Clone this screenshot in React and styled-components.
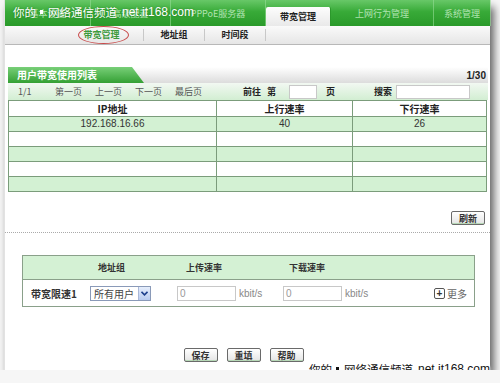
import React from 'react'
import styled, { createGlobalStyle } from 'styled-components'

const GlobalStyle = createGlobalStyle`
  html, body {
    margin: 0;
    padding: 0;
    background: #f6f6f6;
  }
  body {
    font-family: "Noto Sans CJK SC", "Liberation Sans", sans-serif;
    font-size: 11px;
    color: #222;
  }
`

const topTabs = [
  { label: '基本设置', width: 86 },
  { label: '高级配置', width: 80 },
  { label: 'PPPoE服务器', width: 95 },
  { label: '带宽管理', width: 65, active: true },
  { label: '上网行为管理', width: 103 },
  { label: '系统管理', width: 57 },
]

const subTabs = [
  { label: '带宽管理', width: 83, active: true },
  { label: '地址组', width: 60 },
  { label: '时间段', width: 60 },
]

const rows = [
  ['192.168.16.66', '40', '26'],
  ['', '', ''],
  ['', '', ''],
  ['', '', ''],
  ['', '', ''],
]

const Mark = ({ top }) => (
  <Watermark top={top}>
    <span>你的</span>
    <Dot top={top} />
    <span>网络通信频道</span>
    <Net>net.it168.com</Net>
  </Watermark>
)

const App = () => {
  return (
    <>
      <GlobalStyle />
      <Window>
        <TopBar>
          {topTabs.map((t, i) => (
            <TopTab key={i} w={t.width} active={t.active}>
              {t.label}
            </TopTab>
          ))}
        </TopBar>
        <Mark top />

        <SubNav>
          {subTabs.map((t, i) => (
            <SubItem key={i} w={t.width} active={t.active}>
              <SubLabel active={t.active}>
                {t.label}
                {t.active && <Circle />}
              </SubLabel>
            </SubItem>
          ))}
        </SubNav>

        <Section>
          <HeaderBar>
            <HeaderTab>用户带宽使用列表</HeaderTab>
            <PageCount>1/30</PageCount>
          </HeaderBar>
          <Pager>
            <PagerText w={37}>1/1</PagerText>
            <PagerText w={40}>第一页</PagerText>
            <PagerText w={40}>上一页</PagerText>
            <PagerText w={40}>下一页</PagerText>
            <PagerText w={68}>最后页</PagerText>
            <PagerText w={24} bold>前往</PagerText>
            <PagerText w={22} bold>第</PagerText>
            <PageInput />
            <PagerText w={48} bold>页</PagerText>
            <PagerText w={22} bold>搜索</PagerText>
            <SearchInput />
          </Pager>
          <Table>
            <thead>
              <tr>
                <Th w={207}>IP地址</Th>
                <Th w={135}>上行速率</Th>
                <Th>下行速率</Th>
              </tr>
            </thead>
            <tbody>
              {rows.map((r, i) => (
                <Tr key={i} green={i % 2 === 0}>
                  {r.map((c, j) => (
                    <Td key={j}>{c}</Td>
                  ))}
                </Tr>
              ))}
            </tbody>
          </Table>
          <RefreshRow>
            <Btn>刷新</Btn>
          </RefreshRow>
        </Section>

        <Dotted />

        <FormBox>
          <FormHead>
            <Cell w={163} pad={75}>地址组</Cell>
            <Cell w={103} pad={0}>上传速率</Cell>
            <Cell pad={0}>下载速率</Cell>
          </FormHead>
          <FormRow>
            <Label>带宽限速1</Label>
            <Select>
              <span>所有用户</span>
              <SelectArrow>
                <svg width="7" height="5" viewBox="0 0 7 5">
                  <path d="M0.5 0.8 L3.5 3.8 L6.5 0.8" fill="none" stroke="#1d3f8c" strokeWidth="1.6" />
                </svg>
              </SelectArrow>
            </Select>
            <RateInput>0</RateInput>
            <Unit>kbit/s</Unit>
            <RateInput>0</RateInput>
            <Unit>kbit/s</Unit>
            <More>
              <PlusBox>+</PlusBox>
              更多
            </More>
          </FormRow>
        </FormBox>

        <ButtonRow>
          <Btn>保存</Btn>
          <Btn>重填</Btn>
          <Btn>帮助</Btn>
        </ButtonRow>

        <Mark />
      </Window>
    </>
  )
}

export default App

const Window = styled.div`
  position: relative;
  width: 486px;
  height: 370px;
  margin-left: 4px;
  background: #fff;
  border-left: 1px solid #e2e2e2;
  box-sizing: border-box;
  box-shadow: 4px 7px 8px rgba(0, 0, 0, 0.6);
  display: flex;
  flex-direction: column;
`

const TopBar = styled.div`
  height: 26px;
  display: flex;
  align-items: flex-end;
  background: linear-gradient(#68c868, #38aa38 45%, #2a9a2a);
`

const TopTab = styled.div`
  flex: 0 0 ${({ w }) => w}px;
  height: ${({ active }) => (active ? '19px' : '26px')};
  display: flex;
  align-items: center;
  justify-content: center;
  font-size: 9px;
  color: ${({ active }) => (active ? '#222' : 'rgba(230,255,230,0.7)')};
  font-weight: ${({ active }) => (active ? 'bold' : 'normal')};
  background: ${({ active }) => (active ? 'linear-gradient(#fdfdfd, #e9e9e9)' : 'transparent')};
  border-right: 1px solid ${({ active }) => (active ? '#2c982c' : 'rgba(150,220,150,0.6)')};
  border-radius: ${({ active }) => (active ? '2px 2px 0 0' : '0')};
  box-sizing: border-box;
`

const Watermark = styled.div`
  position: absolute;
  ${({ top }) => (top ? 'left: 8px; top: 5px;' : 'right: 0; bottom: -6px;')}
  display: flex;
  align-items: center;
  font-size: 11.5px;
  line-height: 14px;
  white-space: nowrap;
  color: ${({ top }) => (top ? '#fff' : '#111')};
  text-shadow: ${({ top }) =>
    top ? '0 0 2px rgba(0,80,0,0.5)' : '0 0 2px #fff, 0 0 2px #fff, 0 0 3px #fff'};
`

const Dot = styled.span`
  width: 3px;
  height: 4px;
  margin: 0 5px 0 4px;
  background: ${({ top }) => (top ? '#fff' : '#111')};
`

const Net = styled.span`
  font-family: "Liberation Sans", sans-serif;
  font-size: 12px;
  margin-left: 5px;
`

const SubNav = styled.div`
  height: 18px;
  display: flex;
  align-items: center;
  padding-left: 55px;
  background: linear-gradient(#fafafa, #e6e6e6);
  border-bottom: 1px solid #b8b8b8;
`

const SubItem = styled.div`
  flex: 0 0 ${({ w }) => w}px;
  display: flex;
  justify-content: center;
  border-right: 1px solid #c8c8c8;
  height: 12px;
  align-items: center;
`

const SubLabel = styled.div`
  position: relative;
  font-weight: bold;
  font-size: 9px;
  line-height: 12px;
  color: ${({ active }) => (active ? '#3c9a3c' : '#222')};
`

const Circle = styled.div`
  position: absolute;
  left: -5px;
  top: -3px;
  width: 49px;
  height: 16px;
  border: 1px solid #c84a4a;
  border-radius: 50%;
`

const Section = styled.div`
  padding: 22px 2px 0 3px;
`

const HeaderBar = styled.div`
  height: 16px;
  display: flex;
  align-items: center;
  justify-content: space-between;
  background: linear-gradient(#fff, #dcdcdc);
`

const HeaderTab = styled.div`
  width: 136px;
  height: 16px;
  box-sizing: border-box;
  padding-left: 9px;
  line-height: 16px;
  font-size: 10px;
  font-weight: bold;
  color: #fff;
  background: linear-gradient(#78cf78, #34a034);
  clip-path: polygon(0 0, 124px 0, 136px 100%, 0 100%);
`

const PageCount = styled.div`
  font-family: "Liberation Sans", sans-serif;
  font-weight: bold;
  font-size: 10px;
  padding-right: 2px;
`

const Pager = styled.div`
  height: 17px;
  display: flex;
  align-items: center;
  padding-left: 10px;
  background: linear-gradient(#f2f8f2, #d2eed2);
`

const PagerText = styled.div`
  flex: 0 0 ${({ w }) => w}px;
  font-size: 9px;
  color: ${({ bold }) => (bold ? '#222' : '#555')};
  font-weight: ${({ bold }) => (bold ? 'bold' : 'normal')};
`

const PageInput = styled.div`
  width: 26px;
  height: 12px;
  background: #fff;
  border: 1px solid #c8c8c8;
  margin-right: 9px;
`

const SearchInput = styled(PageInput)`
  width: 72px;
  margin: 0;
`

const Table = styled.table`
  width: 479px;
  border-collapse: collapse;
  table-layout: fixed;
  border: 1px solid #7b9c7b;
`

const Th = styled.th`
  ${({ w }) => (w ? `width: ${w}px;` : '')}
  height: 15px;
  padding: 0;
  font-size: 10px;
  border: 1px solid #7b9c7b;
  background: #fff;
`

const Tr = styled.tr`
  background: ${({ green }) => (green ? '#d3f1d3' : '#fff')};
`

const Td = styled.td`
  height: 14px;
  padding: 0;
  text-align: center;
  font-family: "Liberation Sans", sans-serif;
  font-size: 10px;
  line-height: 12px;
  color: #333;
  border: 1px solid #7b9c7b;
`

const RefreshRow = styled.div`
  display: flex;
  justify-content: flex-end;
  padding: 19px 3px 0 0;
`

const Btn = styled.div`
  width: 32px;
  height: 12px;
  display: flex;
  align-items: center;
  justify-content: center;
  font-size: 9px;
  font-weight: bold;
  color: #333;
  border: 1px solid #6a6a6a;
  border-radius: 2px;
  background: linear-gradient(#fff, #e4e4e4);
  box-shadow: inset 0 -1px 0 #b6d8b6;
`

const Dotted = styled.div`
  margin: 7px 0 0 0;
  border-top: 1px dotted #aaa;
`

const FormBox = styled.div`
  margin: 22px 0 0 17px;
  width: 451px;
  border: 1px solid #8aa08a;
`

const FormHead = styled.div`
  height: 23px;
  display: flex;
  align-items: center;
  background: #d4f1d4;
  border-bottom: 1px solid #8aa08a;
`

const Cell = styled.div`
  flex: ${({ w }) => (w ? `0 0 ${w}px` : '1')};
  font-size: 9px;
  font-weight: bold;
  padding-left: ${({ pad }) => pad}px;
  box-sizing: border-box;
  color: #333;
`

const FormRow = styled.div`
  height: 26px;
  display: flex;
  align-items: center;
  padding-left: 8px;
`

const Label = styled.div`
  width: 59px;
  font-size: 10px;
  font-weight: bold;
  color: #333;
`

const Select = styled.div`
  width: 61px;
  height: 15px;
  box-sizing: border-box;
  border: 1px solid #8a9ab8;
  display: flex;
  align-items: center;
  justify-content: space-between;
  padding-left: 3px;
  font-size: 10px;
  color: #444;
  margin-right: 26px;
`

const SelectArrow = styled.div`
  width: 11px;
  height: 13px;
  display: flex;
  align-items: center;
  justify-content: center;
  background: linear-gradient(#e6eefc, #b8cbef);
  border-left: 1px solid #aab8d8;
`

const RateInput = styled.div`
  width: 59px;
  height: 15px;
  box-sizing: border-box;
  border: 1px solid #c8c8c8;
  padding-left: 2px;
  font-family: "Liberation Sans", sans-serif;
  font-size: 10px;
  line-height: 13px;
  color: #999;
  margin-right: 3px;
`

const Unit = styled.div`
  width: 44px;
  font-family: "Liberation Sans", sans-serif;
  font-size: 10px;
  color: #888;
`

const More = styled.div`
  margin-left: auto;
  margin-right: 7px;
  display: flex;
  align-items: center;
  gap: 2px;
  font-size: 10px;
  color: #666;
`

const PlusBox = styled.div`
  width: 9px;
  height: 9px;
  border: 1px solid #555;
  border-radius: 2px;
  display: flex;
  align-items: center;
  justify-content: center;
  font-family: "Liberation Sans", sans-serif;
  font-size: 10px;
  font-weight: bold;
  line-height: 9px;
  color: #333;
`

const ButtonRow = styled.div`
  display: flex;
  justify-content: center;
  gap: 9px;
  margin: 41px 8px 0 0;
`
